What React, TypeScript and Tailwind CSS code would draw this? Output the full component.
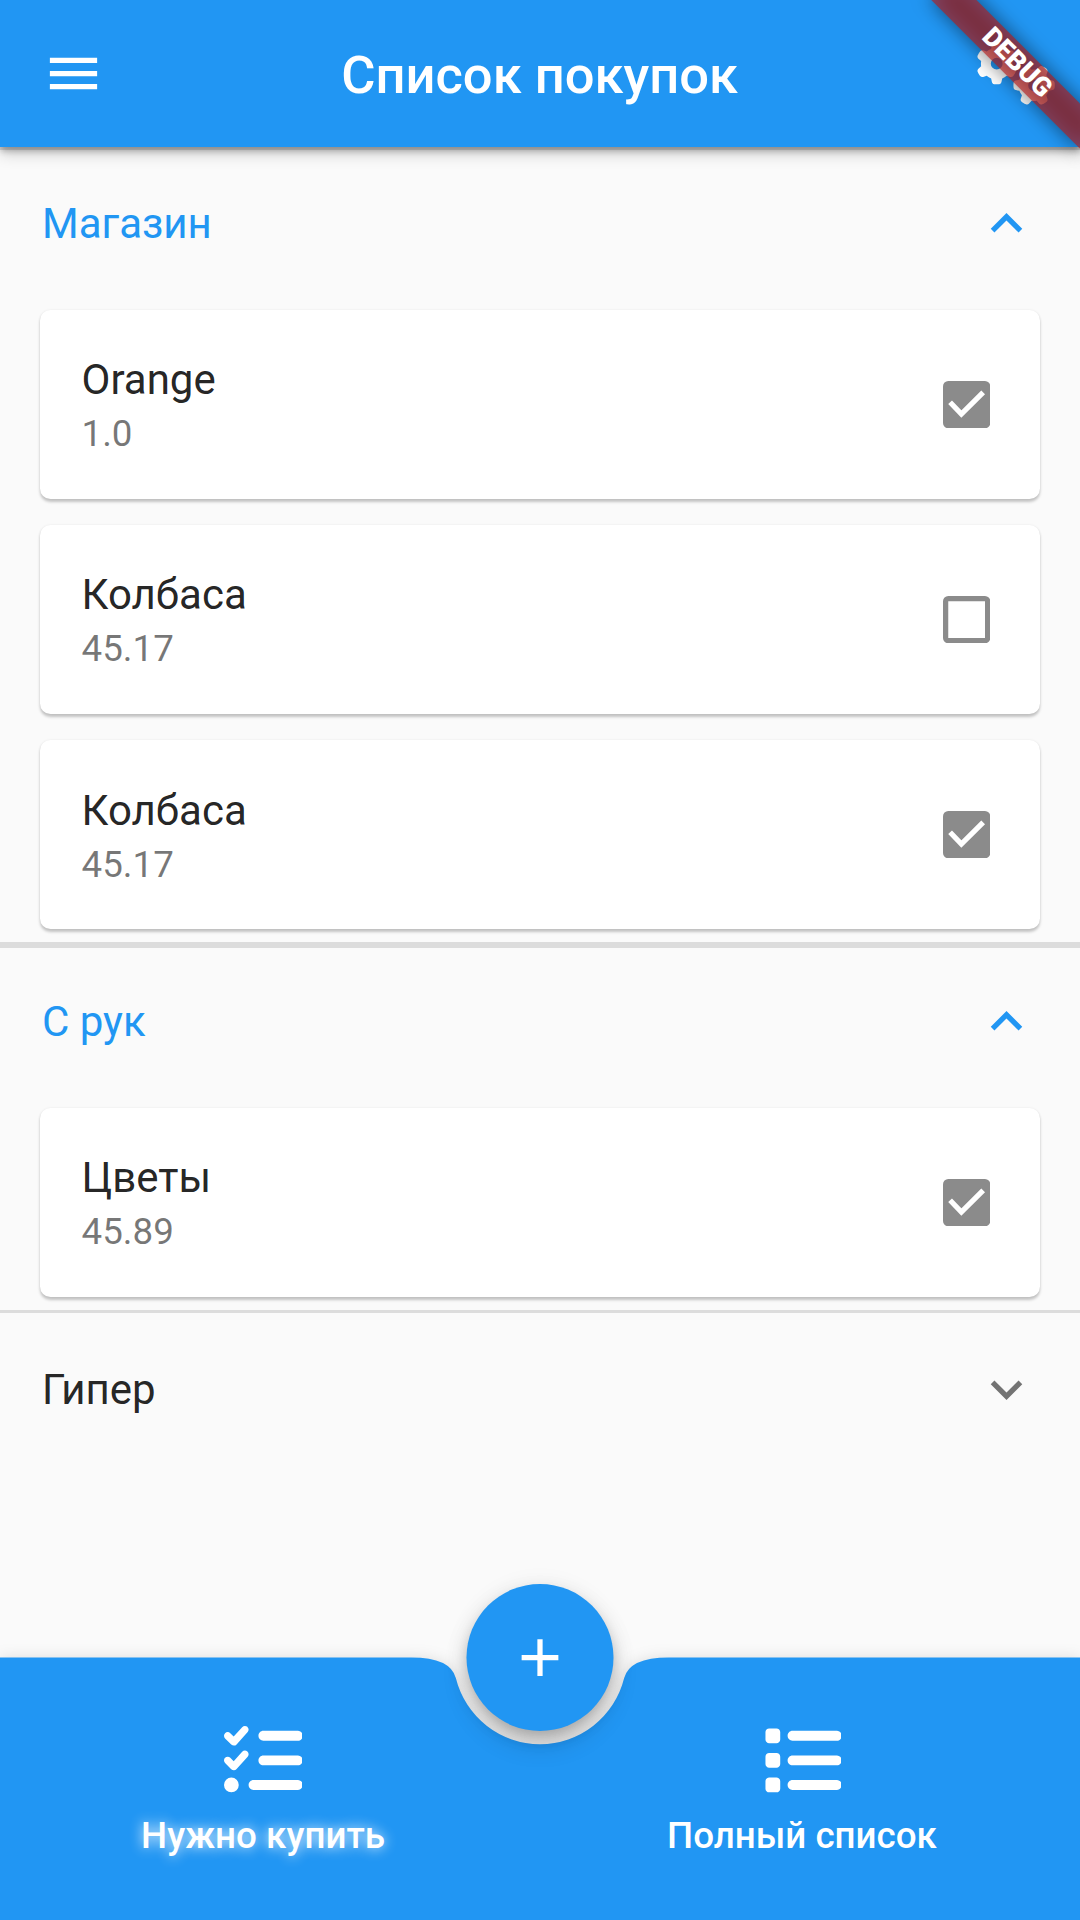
import React from "react";
import { FaGears, FaListCheck, FaList } from "react-icons/fa6";

type Item = { name: string; amount: string; checked: boolean };
type Group = { title: string; open: boolean; items: Item[] };

const groups: Group[] = [
  {
    title: "Магазин",
    open: true,
    items: [
      { name: "Orange", amount: "1.0", checked: true },
      { name: "Колбаса", amount: "45.17", checked: false },
      { name: "Колбаса", amount: "45.17", checked: true },
    ],
  },
  {
    title: "С рук",
    open: true,
    items: [{ name: "Цветы", amount: "45.89", checked: true }],
  },
  { title: "Гипер", open: false, items: [] },
];

function Checkbox({ checked }: { checked: boolean }) {
  return (
    <svg viewBox="0 0 18 18" className="size-[47.25px]" fill="none">
      {checked ? (
        <>
          <rect width="18" height="18" rx="2" fill="#8b8b8b" />
          <path d="M2.7 8.1 L7 12.6 L15.3 4.3" stroke="#fff" strokeWidth="2" />
        </>
      ) : (
        <rect x="1" y="1" width="16" height="16" rx="1" stroke="#8b8b8b" strokeWidth="2" />
      )}
    </svg>
  );
}

function ItemCard({ item }: { item: Item }) {
  return (
    <li className="my-[13.125px] mr-[40px] ml-[39.5px] flex h-[189px] items-center justify-between rounded-[10.5px] bg-white pr-[49.6px] pl-[42px] shadow-[0_2.6px_3px_rgba(0,0,0,0.22),0_0_3px_rgba(0,0,0,0.05)]">
      <div className="flex flex-col pt-[1.8px]">
        <span className="text-[42px] leading-[49px] text-black/87">{item.name}</span>
        <span className="mt-[8px] text-[36.75px] leading-[43px] text-black/54">{item.amount}</span>
      </div>
      <Checkbox checked={item.checked} />
    </li>
  );
}

function Rule({ visible }: { visible: boolean }) {
  return <div className={visible ? "h-[2.625px] bg-[#dcdcdc]" : "h-[2.625px]"} />;
}

function GroupSection({ group }: { group: Group }) {
  const tint = group.open ? "text-[#2196f3]" : "pt-px text-black/87";
  return (
    <section className="flex flex-col">
      <Rule visible={group.open} />
      <button className={`flex h-[147px] w-full items-center justify-between px-[42px] text-[42px] ${tint}`}>
        <span>{group.title}</span>
        <svg
          viewBox="0 0 24 24"
          className={group.open ? "size-[63px] rotate-180 text-[#2196f3]" : "size-[63px] text-black/54"}
          fill="currentColor"
        >
          <path d="M16.59 8.59 12 13.17 7.41 8.59 6 10l6 6 6-6z" />
        </svg>
      </button>
      {group.open && (
        <ul className="flex flex-col [&>li+li]:mt-[13.125px]">
          {group.items.map((item, i) => (
            <ItemCard key={i} item={item} />
          ))}
        </ul>
      )}
      <Rule visible={group.open} />
    </section>
  );
}

function DebugBanner() {
  return (
    <div className="pointer-events-none absolute top-0 right-0 z-20 size-[170px] overflow-hidden">
      <div className="absolute top-[47.35px] left-[1.9px] h-[31.5px] w-[210px] rotate-45">
        <div className="absolute inset-0 bg-black/50 blur-[10px]" />
        <div className="relative flex h-full items-center justify-center bg-[#b71c1c]/63 text-[26.8px] leading-none font-black text-white">
          DEBUG
        </div>
      </div>
    </div>
  );
}

export default function App() {
  return (
    <div className="relative flex h-[1920px] w-[1080px] flex-col overflow-hidden bg-[#fafafa] font-['Roboto',sans-serif]">
      <header className="relative z-10 flex h-[147px] shrink-0 items-center justify-between bg-[#2196f3] pr-[24px] pl-[42px] text-white shadow-[0_5px_6px_-1px_rgba(0,0,0,0.24),0_6px_15px_rgba(0,0,0,0.2)]">
        <svg viewBox="0 0 24 24" className="size-[63px]" fill="currentColor">
          <path d="M3 18h18v-2H3v2zm0-5h18v-2H3v2zm0-7v2h18V6H3z" />
        </svg>
        <h1 className="pt-[2px] pr-[3px] text-[52.5px] leading-[62px] font-medium">Список покупок</h1>
        <FaGears className="h-[63px] w-[78.75px]" />
      </header>
      <DebugBanner />

      <main className="flex-1">
        {groups.map((group) => (
          <GroupSection key={group.title} group={group} />
        ))}
      </main>

      <footer className="relative h-[263px] shrink-0 text-white">
        <svg
          viewBox="0 -0.5 1080 263"
          className="absolute inset-0 h-full w-full overflow-visible drop-shadow-[0_2px_8px_rgba(0,0,0,0.15)]"
        >
          <path
            d="M0 0H411.4Q450.75 0 455.92 20.85A86.625 86.625 0 0 0 624.08 20.85Q629.25 0 668.6 0H1080V262.5H0Z"
            fill="#2196f3"
          />
        </svg>
        <nav className="relative flex h-full items-start justify-around pt-[63.5px] pr-[2px] text-[36.75px] leading-[43px] font-medium">
          <a className="flex flex-col items-center">
            <FaListCheck className="size-[78.75px]" />
            <span className="mt-[15px] [text-shadow:0_0_13px_#fff]">Нужно купить</span>
          </a>
          <a className="flex flex-col items-center">
            <FaList className="size-[78.75px]" />
            <span className="mt-[15px]">Полный список</span>
          </a>
        </nav>
        <button className="absolute -top-[73px] left-1/2 flex size-[147px] -translate-x-1/2 items-center justify-center rounded-full bg-[#2196f3] shadow-[0_8px_13px_-2px_rgba(0,0,0,0.2),0_14px_26px_rgba(0,0,0,0.14),0_3px_24px_rgba(0,0,0,0.08)]">
          <svg viewBox="0 0 24 24" className="size-[63px]" fill="currentColor">
            <path d="M19 13h-6v6h-2v-6H5v-2h6V5h2v6h6v2z" />
          </svg>
        </button>
      </footer>
    </div>
  );
}
